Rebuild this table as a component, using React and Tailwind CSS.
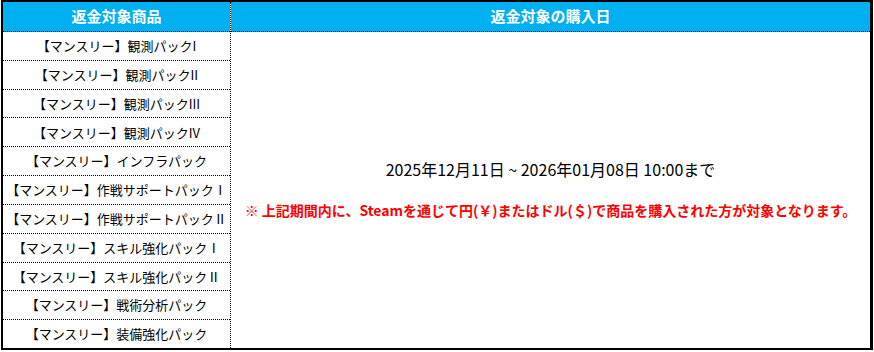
import React from "react";

const products = [
  "【マンスリー】観測パックI",
  "【マンスリー】観測パックII",
  "【マンスリー】観測パックIII",
  "【マンスリー】観測パックIV",
  "【マンスリー】インフラパック",
  "【マンスリー】作戦サポートパックⅠ",
  "【マンスリー】作戦サポートパックⅡ",
  "【マンスリー】スキル強化パックⅠ",
  "【マンスリー】スキル強化パックⅡ",
  "【マンスリー】戦術分析パック",
  "【マンスリー】装備強化パック",
];

const App = () => {
  return (
    <div className="w-[874px] h-[352px] bg-white font-['Noto_Sans_CJK_JP',sans-serif]">
      <div className="ml-[1px] w-[872px] h-[350px] border-2 border-r-[3px] border-black flex">
        {/* 商品 column */}
        <div className="w-[228px] flex flex-col border-r border-dotted border-black">
          <div className="h-[30px] shrink-0 bg-[#00b0f0] border-b border-dotted border-black flex items-center justify-center text-white font-bold text-[15px]">
            返金対象商品
          </div>
          {products.map((name, i) => (
            <div
              key={i}
              className={
                "flex-1 flex items-center justify-center text-[13px] text-black " +
                (i < products.length - 1 ? "border-b border-dotted border-black" : "")
              }
            >
              {name}
            </div>
          ))}
        </div>

        {/* 購入日 column */}
        <div className="flex-1 flex flex-col">
          <div className="h-[30px] shrink-0 bg-[#00b0f0] border-b border-dotted border-black flex items-center justify-center text-white font-bold text-[15px]">
            返金対象の購入日
          </div>
          <div className="flex-1 flex flex-col items-center justify-center gap-[20px]">
            <p className="text-[16px] leading-[21px] text-black">
              2025年12月11日 ~ 2026年01月08日 10:00まで
            </p>
            <p className="text-[14px] leading-[21px] font-bold text-[#ff0000]">
              ※ 上記期間内に、Steamを通じて円(￥)またはドル(＄)で商品を購入された方が対象となります。
            </p>
          </div>
        </div>
      </div>
    </div>
  );
};

export default App;
